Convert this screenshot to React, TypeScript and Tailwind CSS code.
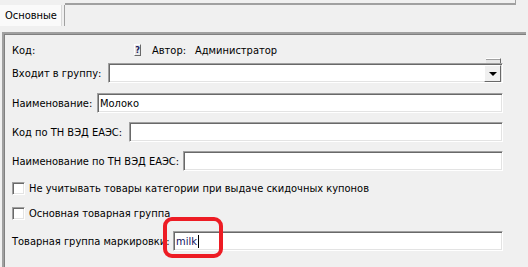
import React from "react";

const sunken =
  "border border-t-[#a0a0a0] border-l-[#a0a0a0] border-r-white border-b-white bg-white shadow-[inset_1px_1px_0_#696969,inset_-1px_-1px_0_#e3e3e3]";

const Field = ({ label, labelW, value, navy }: { label: string; labelW: string; value?: string; navy?: boolean }) => (
  <div className="flex items-center h-[20px]">
    <div className={`${labelW} shrink-0 whitespace-nowrap`}>{label}</div>
    <div className={`flex-1 h-[20px] ${sunken} flex items-center pl-[2px]`}>
      {value && (
        <span className={navy ? "text-[#101060]" : "text-black"}>{value}</span>
      )}
      {navy && <span className="ml-px w-px h-[13px] bg-black" />}
    </div>
  </div>
);

const Check = ({ label }: { label: string }) => (
  <div className="flex items-center h-[13px]">
    <div className={`w-[13px] h-[13px] shrink-0 ${sunken}`} />
    <span className="ml-[4px] whitespace-nowrap">{label}</span>
  </div>
);

export default function App() {
  return (
    <div className="relative w-[528px] h-[267px] overflow-hidden bg-[#f0f0f0] text-[11px] leading-[13px] text-black font-['DejaVu_Sans_Condensed','Liberation_Sans',sans-serif]">
      {/* tab strip */}
      <div className="flex h-[32px]">
        <div className="mt-[5px] h-[21px] w-[62px] shrink-0 bg-[#fafafa] border-r border-[#d9d9d9] pl-[5px] flex items-center">
          Основные
        </div>
        <div className="ml-[2px] mt-[5px] h-[21px] w-px bg-[#a0a0a0]" />
        <div className="flex-1 flex">
          <div className="mt-[3px] h-[2px] w-[450px] bg-[#a0a0a0]" />
          <div className="h-[5px] w-px bg-[#a0a0a0]" />
        </div>
      </div>

      {/* panel */}
      <div className="ml-[2px] w-[524px] h-[235px] border-t-2 border-l-2 border-t-[#a0a0a0] border-l-[#a0a0a0] shadow-[inset_1px_1px_0_#808080] pl-[8px] pt-[7px]">
        <div className="w-[491px]">
          <div className="flex items-center h-[18px]">
            <span className="w-[122px] shrink-0">Код:</span>
            <div className="w-[7px] h-[12px] bg-[#e8e8e8] border border-t-white border-l-white border-r-[#696969] border-b-[#696969] flex items-center justify-center text-[9px] leading-none text-[#202060] font-bold">
              ?
            </div>
            <span className="ml-[11px] w-[43px]">Автор:</span>
            <span>Администратор</span>
          </div>

          {/* combo */}
          <div className="mt-[4px] flex items-center h-[20px]">
            <div className="w-[96px] shrink-0 whitespace-nowrap">Входит в группу:</div>
            <div className={`relative flex-1 h-[20px] ${sunken}`}>
              <div className="absolute right-[1px] -top-[6px] w-[15px] h-[5px] bg-[#e6e6e6] border-t border-t-white border-r border-r-[#696969] shadow-[inset_0_1px_0_#a0a0a0]" />
              <div className="absolute right-[1px] top-[1px] w-[17px] h-[17px] bg-[#f0f0f0] border border-t-white border-l-white border-r-[#696969] border-b-[#696969] flex items-center justify-center">
                <div className="w-0 h-0 border-l-[4px] border-r-[4px] border-t-[4px] border-l-transparent border-r-transparent border-t-black" />
              </div>
            </div>
          </div>

          <div className="mt-[10px]">
            <Field label="Наименование:" labelW="w-[85px]" value="Молоко" />
          </div>
          <div className="mt-[9px]">
            <Field label="Код по ТН ВЭД ЕАЭС:" labelW="w-[117px]" />
          </div>
          <div className="mt-[9px]">
            <Field label="Наименование по ТН ВЭД ЕАЭС:" labelW="w-[171px]" />
          </div>

          <div className="mt-[11px]">
            <Check label="Не учитывать товары категории при выдаче скидочных купонов" />
          </div>
          <div className="mt-[12px]">
            <Check label="Основная товарная группа" />
          </div>

          <div className="mt-[11px]">
            <Field label="Товарная группа маркировки:" labelW="w-[161px]" value="milk" navy />
          </div>
        </div>
      </div>

      {/* red annotation */}
      <div className="absolute left-[163px] top-[217px] w-[60px] h-[41px] border-4 border-[#ed1c24] rounded-[9px]" />
    </div>
  );
}
